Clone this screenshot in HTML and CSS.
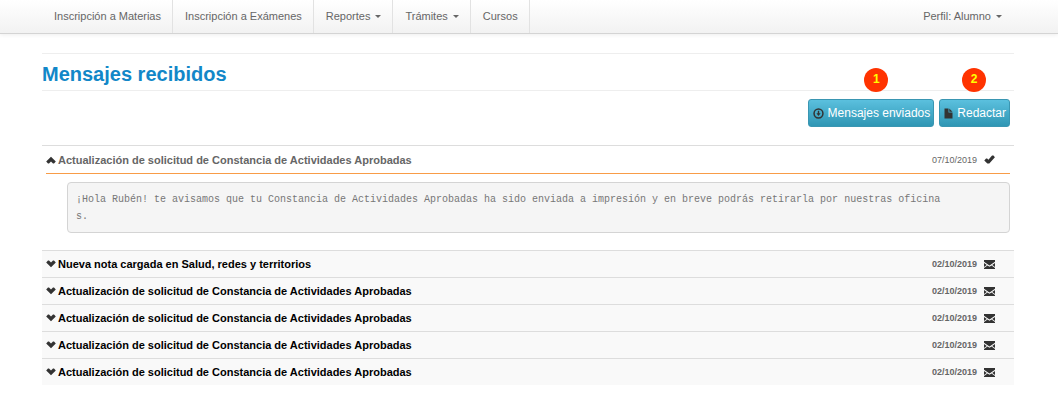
FILE: index.html
```html
<!DOCTYPE html>
<html lang="es">
<head>
    <meta charset="UTF-8">
    <meta name="viewport" content="width=device-width, initial-scale=1.0">
    <title>Mensajes recibidos</title>
    <link rel="stylesheet" href="styles.css">
</head>
<body>
    <svg class="sprite" aria-hidden="true">
        <symbol id="icon-up" viewBox="0 0 10 8"><path d="M5 .8 9.8 5.4 8 7.4H7L5 5.4 3 7.4H2L.2 5.4z"/></symbol>
        <symbol id="icon-down" viewBox="0 0 10 8"><path d="M5 7.2.2 2.6 2 .6h1l2 2 2-2h1l1.8 2z"/></symbol>
        <symbol id="icon-check" viewBox="0 0 12 10"><path d="M.2 6.2 2.2 4h1.2l1.4 1.2L8.8.6h1.6L12 2.4 5.8 9.4H3.6z"/></symbol>
        <symbol id="icon-mail" viewBox="0 0 11 9"><path d="M0 0h11v1.8L5.5 5.4 0 1.8zM0 3 2.8 4.9 0 7zM11 3 8.2 4.9 11 7zM0 9v-1l3.5-2.6 2 1.3 2-1.3L11 8v1z"/></symbol>
        <symbol id="icon-download" viewBox="0 0 11 11"><path d="M5.5.3a5.2 5.2 0 1 0 0 10.4 5.2 5.2 0 0 0 0-10.4zm0 1.5a3.7 3.7 0 1 1 0 7.4 3.7 3.7 0 0 1 0-7.4z" fill-rule="evenodd"/><path d="M4.8 2.8h1.4v2.5h1.4L5.5 8.1 3.4 5.3h1.4z"/></symbol>
        <symbol id="icon-file" viewBox="0 0 9 11"><path d="M.5.4h4v4.2h4v6h-8zM5.3.4l3.2 3.4H5.3z"/></symbol>
    </svg>

    <nav class="navbar">
        <div class="container navbar-inner">
            <ul class="nav">
                <li><a href="#">Inscripción a Materias</a></li>
                <li><a href="#">Inscripción a Exámenes</a></li>
                <li><a href="#">Reportes <span class="caret"></span></a></li>
                <li><a href="#">Trámites <span class="caret"></span></a></li>
                <li><a href="#">Cursos</a></li>
            </ul>
            <a class="profile" href="#">Perfil: Alumno <span class="caret"></span></a>
        </div>
    </nav>

    <main class="container">
        <h1>Mensajes recibidos</h1>

        <div class="actions">
            <button type="button" class="btn">
                <svg class="icon-round"><use href="#icon-download"/></svg>Mensajes enviados
                <span class="badge badge-sent">1</span>
            </button>
            <button type="button" class="btn">
                <svg class="icon-page"><use href="#icon-file"/></svg>Redactar
                <span class="badge badge-compose">2</span>
            </button>
        </div>

        <div class="messages">
            <details class="message read" open>
                <summary>
                    <svg class="arrow arrow-up"><use href="#icon-up"/></svg>
                    <svg class="arrow arrow-down"><use href="#icon-down"/></svg>
                    <span class="subject">Actualización de solicitud de Constancia de Actividades Aprobadas</span>
                    <time datetime="2019-10-07">07/10/2019</time>
                    <svg class="status"><use href="#icon-check"/></svg>
                </summary>
                <pre>¡Hola Rubén! te avisamos que tu Constancia de Actividades Aprobadas ha sido enviada a impresión y en breve podrás retirarla por nuestras oficina
s.</pre>
            </details>
            <details class="message">
                <summary>
                    <svg class="arrow arrow-up"><use href="#icon-up"/></svg>
                    <svg class="arrow arrow-down"><use href="#icon-down"/></svg>
                    <span class="subject">Nueva nota cargada en Salud, redes y territorios</span>
                    <time datetime="2019-10-02">02/10/2019</time>
                    <svg class="status"><use href="#icon-mail"/></svg>
                </summary>
            </details>
            <details class="message">
                <summary>
                    <svg class="arrow arrow-up"><use href="#icon-up"/></svg>
                    <svg class="arrow arrow-down"><use href="#icon-down"/></svg>
                    <span class="subject">Actualización de solicitud de Constancia de Actividades Aprobadas</span>
                    <time datetime="2019-10-02">02/10/2019</time>
                    <svg class="status"><use href="#icon-mail"/></svg>
                </summary>
            </details>
            <details class="message">
                <summary>
                    <svg class="arrow arrow-up"><use href="#icon-up"/></svg>
                    <svg class="arrow arrow-down"><use href="#icon-down"/></svg>
                    <span class="subject">Actualización de solicitud de Constancia de Actividades Aprobadas</span>
                    <time datetime="2019-10-02">02/10/2019</time>
                    <svg class="status"><use href="#icon-mail"/></svg>
                </summary>
            </details>
            <details class="message">
                <summary>
                    <svg class="arrow arrow-up"><use href="#icon-up"/></svg>
                    <svg class="arrow arrow-down"><use href="#icon-down"/></svg>
                    <span class="subject">Actualización de solicitud de Constancia de Actividades Aprobadas</span>
                    <time datetime="2019-10-02">02/10/2019</time>
                    <svg class="status"><use href="#icon-mail"/></svg>
                </summary>
            </details>
            <details class="message">
                <summary>
                    <svg class="arrow arrow-up"><use href="#icon-up"/></svg>
                    <svg class="arrow arrow-down"><use href="#icon-down"/></svg>
                    <span class="subject">Actualización de solicitud de Constancia de Actividades Aprobadas</span>
                    <time datetime="2019-10-02">02/10/2019</time>
                    <svg class="status"><use href="#icon-mail"/></svg>
                </summary>
            </details>
        </div>
    </main>
</body>
</html>
```
FILE: styles.css
```css
* {
    box-sizing: border-box;
}
body {
    margin: 0;
    font-family: "Liberation Sans", Arial, sans-serif;
    font-size: 12px;
    color: #666;
    background: #fff;
}
.sprite {
    display: none;
}
.container {
    padding: 0 44px 0 42px;
}
.navbar {
    background: linear-gradient(#fff, #f2f2f2);
    border-bottom: 1px solid #d4d4d4;
    box-shadow: 0 1px 4px rgba(0, 0, 0, 0.07);
}
.navbar-inner {
    display: flex;
    justify-content: space-between;
    font-size: 11px;
}
.nav {
    display: flex;
    list-style: none;
    margin: 0;
    padding: 0;
}
.nav li {
    border-right: 1px solid #e2e2e2;
}
.nav a,
.profile {
    display: flex;
    align-items: center;
    gap: 5px;
    padding: 0 12px;
    line-height: 33px;
    color: #666;
    text-decoration: none;
}
.nav a {
    padding-right: 11px;
}
.caret {
    border: 3px solid transparent;
    border-top-color: #666;
    border-bottom: 0;
}
h1 {
    margin: 19px 0 8px;
    padding-top: 4px;
    border-top: 1px solid #eee;
    border-bottom: 1px solid #eee;
    font-size: 20px;
    line-height: 32px;
    color: #1287c8;
}
.actions {
    display: flex;
    justify-content: flex-end;
    gap: 5px;
    padding-right: 4px;
    margin-bottom: 18px;
}
.btn {
    position: relative;
    display: flex;
    align-items: center;
    gap: 4px;
    height: 28px;
    padding: 0 3px 0 4px;
    border: 1px solid #3a96b2;
    border-radius: 3px;
    background: linear-gradient(#5bc0de, #2f96b4);
    color: #fff;
    font: 12px "Liberation Sans", Arial, sans-serif;
    cursor: pointer;
}
.btn svg {
    fill: #333;
}
.icon-round {
    width: 11px;
    height: 11px;
}
.icon-page {
    width: 9px;
    height: 11px;
}
.badge {
    position: absolute;
    top: -32px;
    width: 24px;
    border-radius: 50%;
    background: #ff3300;
    color: #ff0;
    font-size: 12px;
    font-weight: bold;
    line-height: 23px;
    height: 24px;
    text-align: center;
}
.badge-sent {
    right: 45px;
}
.badge-compose {
    right: 23px;
}
.message {
    border-top: 1px solid #ddd;
    background: #f9f9f9;
}
.message.read {
    padding: 0 4px 17px;
    background: #fff;
}
summary {
    display: flex;
    align-items: center;
    height: 26px;
    padding: 0 19px 0 4px;
    list-style: none;
    font-size: 11px;
    font-weight: bold;
    cursor: pointer;
}
.read summary {
    height: 28px;
    padding: 0 15px 0 0;
    border-bottom: 1px solid #f89c47;
}
.arrow {
    width: 10px;
    height: 8px;
    margin-right: 2px;
    fill: #333;
}
details[open] .arrow-down,
details:not([open]) .arrow-up {
    display: none;
}
.subject {
    flex: 1;
    color: #000;
}
.read .subject {
    color: #666;
}
time {
    font-size: 9px;
}
.read time {
    font-weight: normal;
}
.status {
    width: 11px;
    height: 9px;
    margin-left: 7px;
    fill: #333;
}
pre {
    margin: 8px 0 0 21px;
    padding: 8px 8px 7px;
    border: 1px solid #d4d4d4;
    border-radius: 4px;
    background: #f5f5f5;
    color: #777;
    font: 10px/17px "Liberation Mono", "Courier New", monospace;
    white-space: pre-wrap;
    overflow-wrap: anywhere;
}
```
